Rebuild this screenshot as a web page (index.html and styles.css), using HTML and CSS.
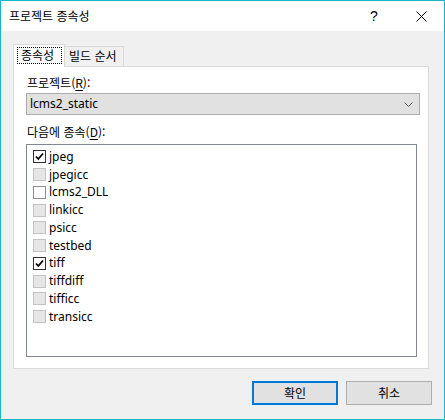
FILE: index.html
```html
<!DOCTYPE html>
<html lang="ko">
<head>
<meta charset="utf-8">
<title>프로젝트 종속성</title>
<link rel="stylesheet" href="styles.css">
</head>
<body>
<div class="window">
  <div class="titlebar">
    <div class="title">프로젝트 종속성</div>
    <div class="caption-btn help">?</div>
    <div class="caption-btn close">
      <svg width="11" height="11" viewBox="0 0 11 11"><path d="M0.5 0.5 L10.5 10.5 M10.5 0.5 L0.5 10.5" stroke="#000" stroke-width="1" fill="none"/></svg>
    </div>
  </div>
  <div class="body">
    <div class="tabs">
      <div class="tab selected"><span class="focus">종속성</span></div>
      <div class="tab other">빌드 순서</div>
    </div>
    <div class="panel">
      <div class="label">프로젝트(<u>R</u>):</div>
      <div class="combo">
        <span class="combo-text">lcms2_static</span>
        <svg class="chevron" width="9" height="5" viewBox="0 0 9 5"><path d="M0.5 0.5 L4.5 4.5 L8.5 0.5" stroke="#555" stroke-width="1" fill="none"/></svg>
      </div>
      <div class="label second">다음에 종속(<u>D</u>):</div>
      <div class="list">
        <div class="row"><span class="cb checked"><svg width="11" height="11" viewBox="0 0 11 11"><path d="M2 5.5 L4.3 8 L9 2.5" stroke="#000" stroke-width="1.8" fill="none"/></svg></span>jpeg</div>
        <div class="row"><span class="cb"></span>jpegicc</div>
        <div class="row"><span class="cb hot"></span>lcms2_DLL</div>
        <div class="row"><span class="cb"></span>linkicc</div>
        <div class="row"><span class="cb"></span>psicc</div>
        <div class="row"><span class="cb"></span>testbed</div>
        <div class="row"><span class="cb checked"><svg width="11" height="11" viewBox="0 0 11 11"><path d="M2 5.5 L4.3 8 L9 2.5" stroke="#000" stroke-width="1.8" fill="none"/></svg></span>tiff</div>
        <div class="row"><span class="cb"></span>tiffdiff</div>
        <div class="row"><span class="cb"></span>tifficc</div>
        <div class="row"><span class="cb"></span>transicc</div>
      </div>
    </div>
    <div class="buttons">
      <div class="btn default">확인</div>
      <div class="btn">취소</div>
    </div>
  </div>
</div>
</body>
</html>
```
FILE: styles.css
```css
* { box-sizing: border-box; }
html, body { margin: 0; padding: 0; }
body {
  font-family: "Noto Sans", "Noto Sans CJK KR", sans-serif;
  font-size: 12px;
  color: #000;
  background: #f0f0f0;
}
.window {
  width: 445px;
  height: 420px;
  border: 1px solid #18b4c7;
  background: #f0f0f0;
  display: flex;
  flex-direction: column;
}
.titlebar {
  height: 30px;
  background: #fff;
  display: flex;
  align-items: center;
  flex-shrink: 0;
}
.title {
  flex: 1;
  padding-left: 8px;
  font-family: "Noto Sans CJK KR", sans-serif;
  font-size: 12px;
  line-height: 16px;
  padding-bottom: 1px;
}
.caption-btn {
  width: 46px;
  height: 30px;
  display: flex;
  align-items: center;
  justify-content: center;
}
.help {
  font-family: "Liberation Sans", sans-serif;
  font-size: 14px;
  padding-right: 2px;
  padding-bottom: 1px;
}
.close svg { display: block; }
.body {
  flex: 1;
  padding: 13px 0 0 12px;
  display: flex;
  flex-direction: column;
}
.tabs {
  display: flex;
  align-items: flex-end;
  height: 23px;
  margin-bottom: -1px;
}
.tab {
  height: 21px;
  border: 1px solid #d9d9d9;
  border-left: none;
  border-bottom: none;
  background: #f0f0f0;
  font-family: "Noto Sans CJK KR", sans-serif;
  font-size: 12px;
  line-height: 18px;
  white-space: nowrap;
}
.tab.other {
  width: 59px;
  padding-left: 4px;
}
.tab.selected {
  position: relative;
  z-index: 1;
  width: 52px;
  height: 23px;
  border-left: 1px solid #d9d9d9;
  background: #fff;
  padding: 2px 0 0 3px;
}
.focus {
  display: block;
  width: 45px;
  height: 17px;
  outline: 1px dotted #000;
  outline-offset: -1px;
  padding-left: 4px;
  line-height: 16px;
}
.panel {
  width: 416px;
  height: 303px;
  border: 1px solid #d9d9d9;
  background: #fff;
  padding: 8px 0 0 12px;
}
.label {
  font-family: "Noto Sans CJK KR", sans-serif;
  line-height: 15px;
  padding-left: 1px;
}
.label u { text-decoration-thickness: 1px; text-underline-offset: 2px; }
.combo {
  margin-top: 3px;
  width: 394px;
  height: 22px;
  background: #e1e1e1;
  border: 1px solid #adadad;
  display: flex;
  align-items: center;
  padding: 0 6px 0 3px;
}
.combo-text { flex: 1; line-height: 16px; padding-bottom: 1px; }
.chevron { display: block; }
.label.second { margin-top: 9px; }
.list {
  margin-top: 5px;
  width: 391px;
  height: 213px;
  border: 1px solid #828790;
  padding: 3px 0 0 6px;
}
.row {
  height: 17.75px;
  display: flex;
  align-items: center;
  line-height: 16px;
  color: #000;
}
.cb {
  width: 13px;
  height: 13px;
  border: 1px solid #c2c2c2;
  background: #e6e6e6;
  margin-right: 3px;
  flex-shrink: 0;
  display: flex;
  align-items: center;
  justify-content: center;
}
.cb.hot { background: #fff; border-color: #8f8f8f; }
.cb.checked { background: #fff; border-color: #333; }
.cb svg { display: block; }
.buttons {
  display: flex;
  justify-content: flex-end;
  gap: 8px;
  padding-right: 12px;
  margin-top: 12px;
}
.btn {
  width: 86px;
  height: 24px;
  background: #e1e1e1;
  border: 1px solid #adadad;
  display: flex;
  align-items: center;
  justify-content: center;
  font-family: "Noto Sans CJK KR", sans-serif;
  line-height: 16px;
}
.btn.default { border: 2px solid #0078d7; }
```
